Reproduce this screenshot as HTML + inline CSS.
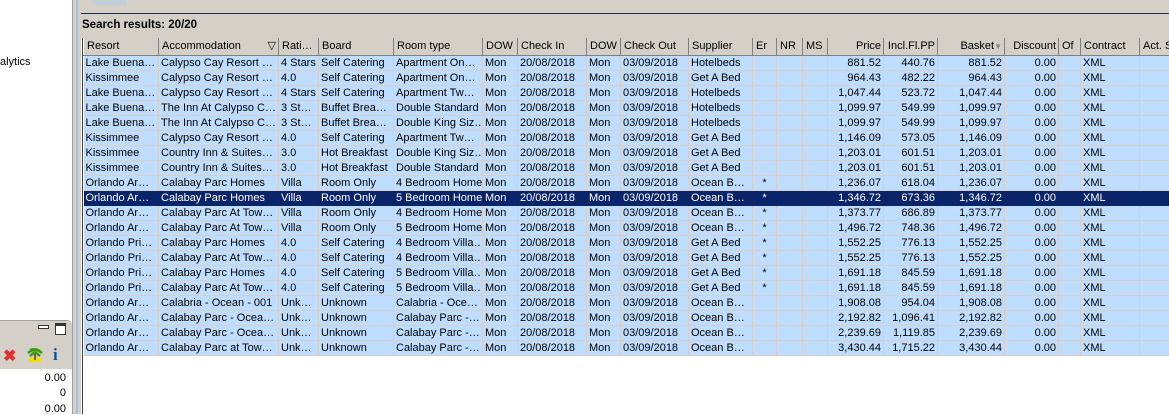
<!DOCTYPE html>
<html><head><meta charset="utf-8"><style>
*{margin:0;padding:0;box-sizing:border-box}
body{width:1169px;height:414px;overflow:hidden;background:#fff;font-family:"Liberation Sans",sans-serif;font-size:11px;position:relative;color:#000}
.abs{position:absolute}
table{position:absolute;left:83px;top:38px;border-collapse:collapse;table-layout:fixed;width:1100px}
td,th{height:15px;padding:0 2px;white-space:nowrap;overflow:hidden;font-weight:normal;text-align:left;line-height:14px}
th{height:17px;background:#d4d0c8;border-left:1px solid #fff;border-right:1px solid #808080;border-bottom:1px solid #808080;padding-left:3px}
td{background:#bfdeff;border-right:1px solid #d8d0c8;border-bottom:1px solid #d8d0c8}
tr.s td{background:#0a246a;color:#fff;border-color:#0a246a}
.r{text-align:right}
.c{text-align:center}
</style></head><body>
<div class="abs" style="left:0;top:0;width:72px;height:318px;background:#fff"></div>
<div class="abs" style="left:0;top:56px;font-size:11px">alytics</div>
<div class="abs" style="left:72px;top:0;width:1px;height:414px;background:#a0a0a0"></div>
<div class="abs" style="left:73px;top:0;width:3px;height:414px;background:#d4d0c8"></div>
<div class="abs" style="left:76px;top:0;width:2px;height:414px;background:#a6c0e0"></div>
<div class="abs" style="left:78px;top:0;width:3px;height:414px;background:#d4d0c8"></div>
<div class="abs" style="left:81px;top:0;width:1088px;height:13px;background:#d4d0c8"></div>
<div class="abs" style="left:92px;top:0;width:34px;height:5px;background:#c4d0d8"></div>
<div class="abs" style="left:81px;top:13px;width:1088px;height:1px;background:#1a2a50"></div>
<div class="abs" style="left:81px;top:14px;width:1088px;height:24px;background:#d4d0c8"></div>
<div class="abs" style="left:82px;top:19px;font-weight:bold;font-size:11.5px">Search results: 20/20</div>
<div class="abs" style="left:82px;top:38px;width:1px;height:376px;background:#404040"></div>
<!-- left bottom panel -->
<div class="abs" style="left:0;top:320px;width:72px;height:25px;background:#d4d0c8;border-top:1px solid #a0a0a0;border-radius:0 5px 0 0"></div>
<div class="abs" style="left:38px;top:325px;width:11px;height:4px;border:1px solid #333;background:#fff"></div>
<div class="abs" style="left:55px;top:323px;width:11px;height:12px;border:1px solid #333;border-top-width:3px;background:#fff"></div>
<div class="abs" style="left:0;top:345px;width:72px;height:24px;background:#d4d0c8"></div>
<div class="abs" style="left:3px;top:346px;color:#e03030;font-size:16px;font-weight:bold">✖</div>
<div class="abs" style="left:27px;top:347px;width:16px;height:16px"><svg width="16" height="16"><ellipse cx="8" cy="13" rx="7" ry="2.5" fill="#f0e000"/><path d="M8 13 L8 6" stroke="#8a5a10" stroke-width="2"/><path d="M1 6 Q8 0 15 6 M3 3 Q8 1 13 4 M8 5 L3 9 M8 5 L13 9" stroke="#3a9a10" stroke-width="2.5" fill="none"/></svg></div>
<div class="abs" style="left:53px;top:345px;color:#1050a0;font-size:17px;font-weight:bold;font-family:'Liberation Serif',serif">i</div>
<div class="abs" style="left:0;top:369px;width:70px;height:45px;background:#fff"></div>
<div class="abs r" style="left:0;top:372px;width:66px;text-align:right">0.00</div>
<div class="abs r" style="left:0;top:387px;width:66px;text-align:right">0</div>
<div class="abs r" style="left:0;top:403px;width:66px;text-align:right">0.00</div>
<table>
<colgroup><col style="width:75px"><col style="width:120px"><col style="width:40px"><col style="width:75px"><col style="width:89px"><col style="width:35px"><col style="width:69px"><col style="width:34px"><col style="width:68px"><col style="width:64px"><col style="width:24px"><col style="width:26px"><col style="width:25px"><col style="width:56px"><col style="width:54px"><col style="width:67px"><col style="width:54px"><col style="width:22px"><col style="width:59px"><col style="width:44px"></colgroup>
<tr><th>Resort</th><th>Accommodation <span style="float:right">▽</span></th><th>Rati…</th><th>Board</th><th>Room type</th><th>DOW</th><th>Check In</th><th>DOW</th><th>Check Out</th><th>Supplier</th><th>Er</th><th>NR</th><th>MS</th><th class="r">Price</th><th class="r">Incl.Fl.PP</th><th class="r">Basket<span style="color:#888;font-size:8px">▼</span></th><th class="r">Discount</th><th>Of</th><th>Contract</th><th>Act. S</th></tr>
<tr><td>Lake Buena…</td><td>Calypso Cay Resort …</td><td>4 Stars</td><td>Self Catering</td><td>Apartment On…</td><td>Mon</td><td>20/08/2018</td><td>Mon</td><td>03/09/2018</td><td>Hotelbeds</td><td></td><td></td><td></td><td class="r">881.52</td><td class="r">440.76</td><td class="r">881.52</td><td class="r">0.00</td><td></td><td>XML</td><td></td></tr>
<tr><td>Kissimmee</td><td>Calypso Cay Resort …</td><td>4.0</td><td>Self Catering</td><td>Apartment On…</td><td>Mon</td><td>20/08/2018</td><td>Mon</td><td>03/09/2018</td><td>Get A Bed</td><td></td><td></td><td></td><td class="r">964.43</td><td class="r">482.22</td><td class="r">964.43</td><td class="r">0.00</td><td></td><td>XML</td><td></td></tr>
<tr><td>Lake Buena…</td><td>Calypso Cay Resort …</td><td>4 Stars</td><td>Self Catering</td><td>Apartment Tw…</td><td>Mon</td><td>20/08/2018</td><td>Mon</td><td>03/09/2018</td><td>Hotelbeds</td><td></td><td></td><td></td><td class="r">1,047.44</td><td class="r">523.72</td><td class="r">1,047.44</td><td class="r">0.00</td><td></td><td>XML</td><td></td></tr>
<tr><td>Lake Buena…</td><td>The Inn At Calypso C…</td><td>3 St…</td><td>Buffet Brea…</td><td>Double Standard</td><td>Mon</td><td>20/08/2018</td><td>Mon</td><td>03/09/2018</td><td>Hotelbeds</td><td></td><td></td><td></td><td class="r">1,099.97</td><td class="r">549.99</td><td class="r">1,099.97</td><td class="r">0.00</td><td></td><td>XML</td><td></td></tr>
<tr><td>Lake Buena…</td><td>The Inn At Calypso C…</td><td>3 St…</td><td>Buffet Brea…</td><td>Double King Siz…</td><td>Mon</td><td>20/08/2018</td><td>Mon</td><td>03/09/2018</td><td>Hotelbeds</td><td></td><td></td><td></td><td class="r">1,099.97</td><td class="r">549.99</td><td class="r">1,099.97</td><td class="r">0.00</td><td></td><td>XML</td><td></td></tr>
<tr><td>Kissimmee</td><td>Calypso Cay Resort …</td><td>4.0</td><td>Self Catering</td><td>Apartment Tw…</td><td>Mon</td><td>20/08/2018</td><td>Mon</td><td>03/09/2018</td><td>Get A Bed</td><td></td><td></td><td></td><td class="r">1,146.09</td><td class="r">573.05</td><td class="r">1,146.09</td><td class="r">0.00</td><td></td><td>XML</td><td></td></tr>
<tr><td>Kissimmee</td><td>Country Inn &amp; Suites…</td><td>3.0</td><td>Hot Breakfast</td><td>Double King Siz…</td><td>Mon</td><td>20/08/2018</td><td>Mon</td><td>03/09/2018</td><td>Get A Bed</td><td></td><td></td><td></td><td class="r">1,203.01</td><td class="r">601.51</td><td class="r">1,203.01</td><td class="r">0.00</td><td></td><td>XML</td><td></td></tr>
<tr><td>Kissimmee</td><td>Country Inn &amp; Suites…</td><td>3.0</td><td>Hot Breakfast</td><td>Double Standard</td><td>Mon</td><td>20/08/2018</td><td>Mon</td><td>03/09/2018</td><td>Get A Bed</td><td></td><td></td><td></td><td class="r">1,203.01</td><td class="r">601.51</td><td class="r">1,203.01</td><td class="r">0.00</td><td></td><td>XML</td><td></td></tr>
<tr><td>Orlando Ar…</td><td>Calabay Parc Homes</td><td>Villa</td><td>Room Only</td><td>4 Bedroom Home</td><td>Mon</td><td>20/08/2018</td><td>Mon</td><td>03/09/2018</td><td>Ocean B…</td><td class="c">*</td><td></td><td></td><td class="r">1,236.07</td><td class="r">618.04</td><td class="r">1,236.07</td><td class="r">0.00</td><td></td><td>XML</td><td></td></tr>
<tr class="s"><td>Orlando Ar…</td><td>Calabay Parc Homes</td><td>Villa</td><td>Room Only</td><td>5 Bedroom Home</td><td>Mon</td><td>20/08/2018</td><td>Mon</td><td>03/09/2018</td><td>Ocean B…</td><td class="c">*</td><td></td><td></td><td class="r">1,346.72</td><td class="r">673.36</td><td class="r">1,346.72</td><td class="r">0.00</td><td></td><td>XML</td><td></td></tr>
<tr><td>Orlando Ar…</td><td>Calabay Parc At Tow…</td><td>Villa</td><td>Room Only</td><td>4 Bedroom Home</td><td>Mon</td><td>20/08/2018</td><td>Mon</td><td>03/09/2018</td><td>Ocean B…</td><td class="c">*</td><td></td><td></td><td class="r">1,373.77</td><td class="r">686.89</td><td class="r">1,373.77</td><td class="r">0.00</td><td></td><td>XML</td><td></td></tr>
<tr><td>Orlando Ar…</td><td>Calabay Parc At Tow…</td><td>Villa</td><td>Room Only</td><td>5 Bedroom Home</td><td>Mon</td><td>20/08/2018</td><td>Mon</td><td>03/09/2018</td><td>Ocean B…</td><td class="c">*</td><td></td><td></td><td class="r">1,496.72</td><td class="r">748.36</td><td class="r">1,496.72</td><td class="r">0.00</td><td></td><td>XML</td><td></td></tr>
<tr><td>Orlando Pri…</td><td>Calabay Parc Homes</td><td>4.0</td><td>Self Catering</td><td>4 Bedroom Villa…</td><td>Mon</td><td>20/08/2018</td><td>Mon</td><td>03/09/2018</td><td>Get A Bed</td><td class="c">*</td><td></td><td></td><td class="r">1,552.25</td><td class="r">776.13</td><td class="r">1,552.25</td><td class="r">0.00</td><td></td><td>XML</td><td></td></tr>
<tr><td>Orlando Pri…</td><td>Calabay Parc At Tow…</td><td>4.0</td><td>Self Catering</td><td>4 Bedroom Villa…</td><td>Mon</td><td>20/08/2018</td><td>Mon</td><td>03/09/2018</td><td>Get A Bed</td><td class="c">*</td><td></td><td></td><td class="r">1,552.25</td><td class="r">776.13</td><td class="r">1,552.25</td><td class="r">0.00</td><td></td><td>XML</td><td></td></tr>
<tr><td>Orlando Pri…</td><td>Calabay Parc Homes</td><td>4.0</td><td>Self Catering</td><td>5 Bedroom Villa…</td><td>Mon</td><td>20/08/2018</td><td>Mon</td><td>03/09/2018</td><td>Get A Bed</td><td class="c">*</td><td></td><td></td><td class="r">1,691.18</td><td class="r">845.59</td><td class="r">1,691.18</td><td class="r">0.00</td><td></td><td>XML</td><td></td></tr>
<tr><td>Orlando Pri…</td><td>Calabay Parc At Tow…</td><td>4.0</td><td>Self Catering</td><td>5 Bedroom Villa…</td><td>Mon</td><td>20/08/2018</td><td>Mon</td><td>03/09/2018</td><td>Get A Bed</td><td class="c">*</td><td></td><td></td><td class="r">1,691.18</td><td class="r">845.59</td><td class="r">1,691.18</td><td class="r">0.00</td><td></td><td>XML</td><td></td></tr>
<tr><td>Orlando Ar…</td><td>Calabria - Ocean - 001</td><td>Unk…</td><td>Unknown</td><td>Calabria - Oce…</td><td>Mon</td><td>20/08/2018</td><td>Mon</td><td>03/09/2018</td><td>Ocean B…</td><td></td><td></td><td></td><td class="r">1,908.08</td><td class="r">954.04</td><td class="r">1,908.08</td><td class="r">0.00</td><td></td><td>XML</td><td></td></tr>
<tr><td>Orlando Ar…</td><td>Calabay Parc - Ocea…</td><td>Unk…</td><td>Unknown</td><td>Calabay Parc -…</td><td>Mon</td><td>20/08/2018</td><td>Mon</td><td>03/09/2018</td><td>Ocean B…</td><td></td><td></td><td></td><td class="r">2,192.82</td><td class="r">1,096.41</td><td class="r">2,192.82</td><td class="r">0.00</td><td></td><td>XML</td><td></td></tr>
<tr><td>Orlando Ar…</td><td>Calabay Parc - Ocea…</td><td>Unk…</td><td>Unknown</td><td>Calabay Parc -…</td><td>Mon</td><td>20/08/2018</td><td>Mon</td><td>03/09/2018</td><td>Ocean B…</td><td></td><td></td><td></td><td class="r">2,239.69</td><td class="r">1,119.85</td><td class="r">2,239.69</td><td class="r">0.00</td><td></td><td>XML</td><td></td></tr>
<tr><td>Orlando Ar…</td><td>Calabay Parc at Tow…</td><td>Unk…</td><td>Unknown</td><td>Calabay Parc -…</td><td>Mon</td><td>20/08/2018</td><td>Mon</td><td>03/09/2018</td><td>Ocean B…</td><td></td><td></td><td></td><td class="r">3,430.44</td><td class="r">1,715.22</td><td class="r">3,430.44</td><td class="r">0.00</td><td></td><td>XML</td><td></td></tr>
</table>
</body></html>
